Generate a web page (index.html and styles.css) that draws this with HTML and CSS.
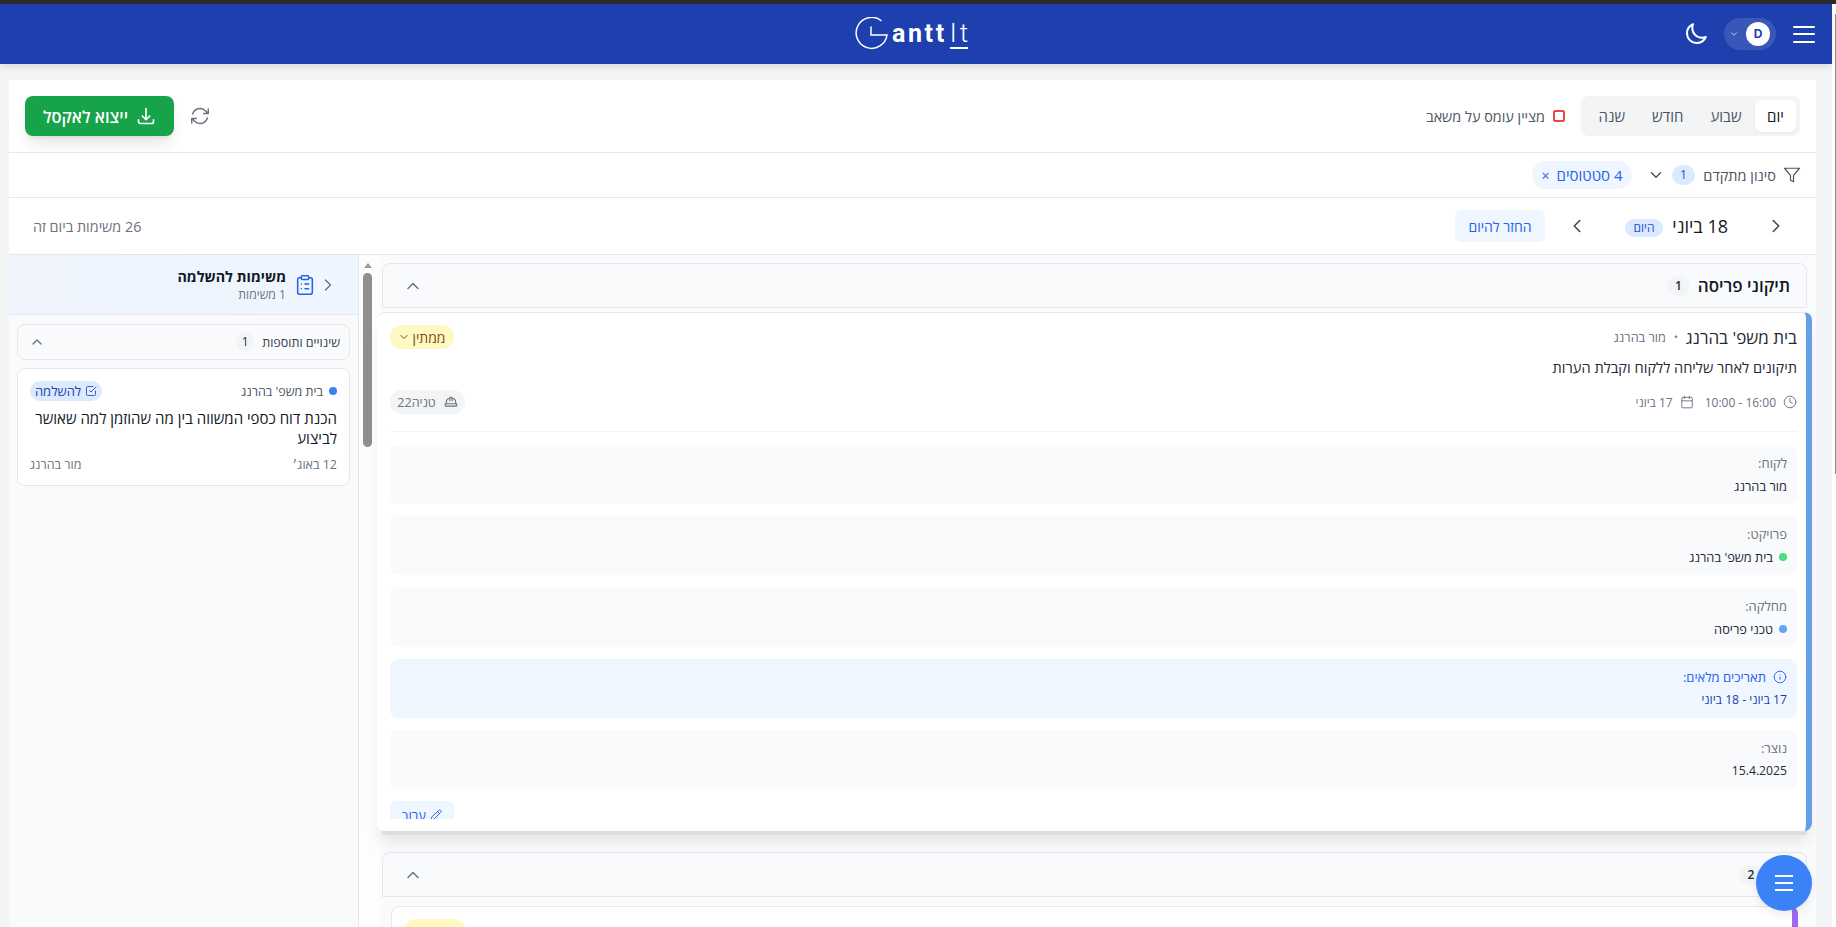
FILE: index.html
```html
<!DOCTYPE html>
<html lang="he" dir="rtl">
<head>
<meta charset="utf-8">
<title>GanttIt</title>
<link rel="stylesheet" href="styles.css">
</head>
<body>
<svg class="defs" aria-hidden="true">
  <symbol id="i-down" viewBox="0 0 24 24"><path d="m6 9 6 6 6-6"/></symbol>
  <symbol id="i-up" viewBox="0 0 24 24"><path d="m18 15-6-6-6 6"/></symbol>
  <symbol id="i-right" viewBox="0 0 24 24"><path d="m9 18 6-6-6-6"/></symbol>
  <symbol id="i-left" viewBox="0 0 24 24"><path d="m15 18-6-6 6-6"/></symbol>
</svg>
<div class="chrome-strip"></div>
<div class="window">
  <div class="page">
    <header class="topbar">
      <div class="topbar-actions">
        <button class="menu-btn" aria-label="menu"><span></span><span></span><span></span></button>
        <div class="user-pill">
          <span class="avatar">D</span>
          <svg class="ic ic-10 user-chev"><use href="#i-down"/></svg>
        </div>
        <svg class="moon" viewBox="0 0 24 24"><path d="M21.752 15.002A9.718 9.718 0 0 1 18 15.75c-5.385 0-9.75-4.365-9.75-9.75 0-1.33.266-2.597.748-3.752A9.753 9.753 0 0 0 3 11.25C3 16.635 7.365 21 12.75 21a9.753 9.753 0 0 0 9.002-5.998z"/></svg>
      </div>
      <div class="logo" dir="ltr">
        <svg class="logo-mark" viewBox="0 0 34 34"><path d="M26 3.5A15.5 15.5 0 1 0 32 18H16V10"/></svg>
        <span class="logo-bold">antt</span><span class="logo-thin">It</span>
      </div>
      <div></div>
    </header>
    <main class="content">
      <section class="panel">
        <div class="toolbar">
          <div class="toolbar-group">
            <div class="segmented">
              <button class="seg seg-active">יום</button>
              <button class="seg">שבוע</button>
              <button class="seg">חודש</button>
              <button class="seg">שנה</button>
            </div>
            <div class="legend"><span class="legend-box"></span><span>מציין עומס על משאב</span></div>
          </div>
          <div class="toolbar-group toolbar-left">
            <svg class="ic refresh" viewBox="0 0 24 24"><path d="M16.023 9.348h4.992v-.001M2.985 19.644v-4.992m0 0h4.992m-4.993 0 3.181 3.183a8.25 8.25 0 0 0 13.803-3.7M4.031 9.865a8.25 8.25 0 0 1 13.803-3.7l3.181 3.182m0-4.991v4.99"/></svg>
            <button class="export-btn">
              <svg class="ic ic-20" viewBox="0 0 24 24"><path d="M3 16.5v2.25A2.25 2.25 0 0 0 5.25 21h13.5A2.25 2.25 0 0 0 21 18.75V16.5M16.5 12 12 16.5m0 0L7.5 12m4.5 4.5V3"/></svg>
              <span>ייצוא לאקסל</span>
            </button>
          </div>
        </div>
        <div class="filters">
          <svg class="ic funnel" viewBox="0 0 24 24"><polygon points="22 3 2 3 10 12.46 10 19 14 21 14 12.46 22 3"/></svg>
          <span class="filter-label">סינון מתקדם</span>
          <span class="filter-count">1</span>
          <svg class="ic filter-chev"><use href="#i-down"/></svg>
          <span class="chip"><span>4 סטטוסים</span><span class="chip-x">×</span></span>
        </div>
        <div class="datebar">
          <div class="datebar-nav">
            <svg class="ic date-chev"><use href="#i-right"/></svg>
            <span class="date-title">18 ביוני</span>
            <span class="today-tag">היום</span>
            <svg class="ic date-chev date-chev2"><use href="#i-left"/></svg>
            <button class="back-today">החזר להיום</button>
          </div>
          <span class="task-total">26 משימות ביום זה</span>
        </div>
        <div class="workspace">
          <div class="board">
            <div class="group">
              <div class="group-head">
                <span class="group-title">תיקוני פריסה</span>
                <span class="count">1</span>
                <svg class="ic head-chev"><use href="#i-up"/></svg>
              </div>
              <article class="task-card strip-blue">
                <div class="task-scroll">
                  <div class="row-between">
                    <div class="task-heading">
                      <span class="task-project">בית משפ' בהרנג</span>
                      <span class="task-bullet">•</span>
                      <span class="task-client">מור בהרנג</span>
                    </div>
                    <span class="status-pill">ממתין<svg class="ic ic-12"><use href="#i-down"/></svg></span>
                  </div>
                  <p class="task-desc">תיקונים לאחר שליחה ללקוח וקבלת הערות</p>
                  <div class="row-between task-meta-row">
                    <div class="task-meta">
                      <svg class="ic ic-14" viewBox="0 0 24 24"><circle cx="12" cy="12" r="10"/><path d="M12 6v6l4 2"/></svg>
                      <span class="time-text" dir="ltr">10:00 - 16:00</span>
                      <svg class="ic ic-14 meta-gap" viewBox="0 0 24 24"><path d="M8 2v4M16 2v4M3 10h18"/><rect x="3" y="4" width="18" height="18" rx="2"/></svg>
                      <span>17 ביוני</span>
                    </div>
                    <span class="worker-pill">
                      <svg class="ic ic-14" viewBox="0 0 24 24"><path d="M2 18a1 1 0 0 0 1 1h18a1 1 0 0 0 1-1v-2a1 1 0 0 0-1-1H3a1 1 0 0 0-1 1v2z"/><path d="M10 10V5a1 1 0 0 1 1-1h2a1 1 0 0 1 1 1v5"/><path d="M4 15v-3a6 6 0 0 1 6-6"/><path d="M14 6a6 6 0 0 1 6 6v3"/></svg>
                      <span>טניה22</span>
                    </span>
                  </div>
                  <div class="divider"></div>
                  <div class="info-list">
                    <div class="info-box"><div class="info-label">לקוח:</div><div class="info-value">מור בהרנג</div></div>
                    <div class="info-box"><div class="info-label">פרויקט:</div><div class="info-value"><span class="dot dot-green"></span>בית משפ' בהרנג</div></div>
                    <div class="info-box"><div class="info-label">מחלקה:</div><div class="info-value"><span class="dot dot-blue"></span>טכני פריסה</div></div>
                    <div class="info-box info-box-blue">
                      <div class="info-label"><svg class="ic ic-14" viewBox="0 0 24 24"><circle cx="12" cy="12" r="10"/><path d="M12 16v-4M12 8h.01"/></svg>תאריכים מלאים:</div>
                      <div class="info-value info-value-num">17 ביוני - 18 ביוני</div>
                    </div>
                    <div class="info-box"><div class="info-label">נוצר:</div><div class="info-value info-value-num">15.4.2025</div></div>
                  </div>
                  <div class="edit-wrap">
                    <button class="edit-btn">
                      <svg class="ic ic-12" viewBox="0 0 24 24"><path d="M17 3a2.85 2.83 0 1 1 4 4L7.5 20.5 2 22l1.5-5.5Z"/><path d="m15 5 4 4"/></svg>
                      <span>ערוך</span>
                    </button>
                  </div>
                </div>
              </article>
            </div>
            <div class="group group-second">
              <div class="group-head">
                <span class="group-title">דף</span>
                <span class="count">2</span>
                <svg class="ic head-chev"><use href="#i-up"/></svg>
              </div>
              <article class="task-card-plain">
                <div class="row-between row-top">
                  <span class="task-project task-project-low">עימוד לדפוס</span>
                  <span class="status-pill status-blank"></span>
                </div>
              </article>
            </div>
          </div>
          <div class="fake-scroll"><span class="fake-arrow"></span><span class="fake-thumb"></span></div>
          <aside class="sidebar">
            <div class="side-head">
              <svg class="ic side-chev-svg"><use href="#i-right"/></svg>
              <svg class="side-clip" viewBox="0 0 24 24"><rect x="8" y="2" width="8" height="4" rx="1"/><path d="M16 4h2a2 2 0 0 1 2 2v14a2 2 0 0 1-2 2H6a2 2 0 0 1-2-2V6a2 2 0 0 1 2-2h2"/><path d="M12 11h4M12 16h4M8 11h.01M8 16h.01"/></svg>
              <div class="side-title-wrap">
                <div class="side-title">משימות להשלמה</div>
                <div class="side-sub">1 משימות</div>
              </div>
            </div>
            <div class="side-body">
              <div class="side-group">
                <span class="side-group-title">שינויים ותוספות</span>
                <span class="count count-small">1</span>
                <svg class="ic ic-16 side-group-chev"><use href="#i-up"/></svg>
              </div>
              <div class="side-card">
                <div class="row-between">
                  <span class="side-project"><span class="dot dot-primary"></span>בית משפ' בהרנג</span>
                  <span class="complete-pill">
                    <svg class="ic ic-12" viewBox="0 0 24 24"><path d="M9 11l3 3L22 4"/><path d="M21 12v7a2 2 0 0 1-2 2H5a2 2 0 0 1-2-2V5a2 2 0 0 1 2-2h11"/></svg>
                    <span>להשלמה</span>
                  </span>
                </div>
                <p class="side-task">הכנת דוח כספי המשווה בין מה שהוזמן למה שאושר לביצוע</p>
                <div class="row-between side-foot"><span>12 באוג׳</span><span>מור בהרנג</span></div>
              </div>
            </div>
          </aside>
        </div>
      </section>
    </main>
  </div>
  <div class="edge"><span class="edge-thumb"></span></div>
</div>
<button class="fab" aria-label="menu"><span></span><span></span><span></span></button>
</body>
</html>
```

FILE: styles.css
```css
* { box-sizing: border-box; }
html, body { margin: 0; height: 100%; overflow: hidden; }
body {
  font-family: "Open Sans", "Liberation Sans", sans-serif;
  color: #1f2937;
  background: #fff;
  font-size: 12px;
}
button { font: inherit; border: 0; background: none; padding: 0; color: inherit; }
p { margin: 0; }
.defs { width: 0; height: 0; position: absolute; }

.ic { fill: none; stroke: currentColor; stroke-width: 2; stroke-linecap: round; stroke-linejoin: round; flex: none; display: block; }
.ic-10 { width: 10px; height: 10px; }
.ic-12 { width: 12px; height: 12px; }
.ic-14 { width: 14px; height: 14px; }
.ic-16 { width: 16px; height: 16px; }
.ic-20 { width: 20px; height: 20px; }

.chrome-strip { height: 4px; background: #2c2c2e; }
.window { display: flex; flex-direction: row-reverse; height: 923px; }
.page { width: 1832px; flex: none; background: #f3f4f6; display: flex; flex-direction: column; }
.edge { flex: 1; background: #fff; display: flex; justify-content: flex-start; }
.edge-thumb { width: 1px; height: 460px; margin-top: 10px; background: #8a8a8a; }

.topbar {
  height: 60px; flex: none; background: #1e40af;
  display: grid; grid-template-columns: 1fr auto 1fr; align-items: center;
  box-shadow: 0 4px 6px -1px rgba(0,0,0,.1);
  position: relative; z-index: 2; padding: 0 17px;
}
.topbar-actions { display: flex; align-items: center; }
.menu-btn { width: 22px; height: 17px; display: flex; flex-direction: column; justify-content: space-between; }
.menu-btn span { height: 2px; background: #fff; border-radius: 1px; }
.user-pill {
  margin-right: 17px; width: 52px; height: 32px; border-radius: 16px;
  background: rgba(255,255,255,.12);
  display: flex; align-items: center; padding-right: 6px; color: #d5ddf5; gap: 7px;
}
.avatar {
  width: 24px; height: 24px; border-radius: 50%; background: #fff; color: #1e40af;
  font: 700 12px/24px Inter, sans-serif; text-align: center;
}
.moon { width: 24px; height: 24px; margin-right: 16px; fill: none; stroke: #fff; stroke-width: 2; stroke-linejoin: round; }

.logo { display: flex; align-items: baseline; color: #fff; height: 34px; width: 118px; }
.logo-mark { width: 34px; height: 34px; fill: none; stroke: #fff; stroke-width: 1.5; stroke-linecap: round; align-self: center; margin-left: -2px; margin-right: 3px; }
.logo-bold { font: 700 25px/34px Roboto, sans-serif; letter-spacing: 2.6px; }
.logo-thin { font: 300 26px/24px Roboto, sans-serif; letter-spacing: 3px; border-bottom: 2px solid #fff; margin-left: 3px; width: 18px; height: 28px; flex: none; }

.content { padding: 16px 16px 0 0; margin-left: 9px; flex: 1; min-height: 0; }
.panel { background: #fff; height: 100%; display: flex; flex-direction: column; }

.toolbar { height: 72px; flex: none; display: flex; align-items: center; justify-content: space-between; padding: 0 16px; }
.toolbar-group { display: flex; align-items: center; }
.segmented { background: #f3f4f6; border-radius: 8px; height: 40px; padding: 4px; display: flex; width: 219px; }
.seg { height: 32px; padding: 0 10px; color: #4b5563; font-size: 15px; flex: 1 1 auto; }
.seg-active { background: #fff; color: #111827; border-radius: 6px; box-shadow: 0 1px 2px rgba(0,0,0,.06); font-weight: 500; flex: none; width: 41px; padding: 0; }
.legend { display: flex; align-items: center; gap: 8px; margin-right: 16px; color: #4b5563; font-size: 14.4px; }
.legend-box { width: 12px; height: 12px; border: 2px solid #ef4444; border-radius: 2px; }
.toolbar-left { gap: 15px; }
.refresh { width: 22px; height: 22px; color: #6b7280; stroke-width: 1.6; }
.export-btn {
  width: 149px; height: 40px; border-radius: 8px; background: #16a34a; color: #fff;
  font-size: 16.5px; font-weight: 600; display: flex; align-items: center; justify-content: center; gap: 8px;
  box-shadow: 0 10px 15px -3px rgba(0,0,0,.1), 0 4px 6px -4px rgba(0,0,0,.1);
}

.filters {
  height: 46px; flex: none; border-top: 1px solid #e5e7eb; border-bottom: 1px solid #e5e7eb;
  display: flex; align-items: center; padding: 0 15px; color: #4b5563; font-size: 14.5px;
}
.funnel { width: 18px; height: 18px; color: #4b5563; stroke-width: 1.6; }
.filter-label { margin-right: 7px; width: 73px; white-space: nowrap; }
.filter-count { width: 23px; height: 20px; border-radius: 10px; background: #dbeafe; color: #1d4ed8; text-align: center; line-height: 20px; margin-right: 8px; font-size: 12px; }
.filter-chev { width: 18px; height: 18px; margin-right: 7px; color: #4b5563; }
.chip {
  margin-right: 15px; height: 28px; width: 100px; border-radius: 14px; background: #eff6ff; color: #2563eb;
  display: flex; align-items: center; justify-content: center; gap: 7px; font-size: 15px; white-space: nowrap;
}
.chip-x { font-size: 14px; }

.datebar { height: 57px; flex: none; display: flex; align-items: center; justify-content: space-between; padding: 0 29px 0 24px; border-bottom: 1px solid #e5e7eb; border-radius: 8px 8px 0 0; }
.datebar-nav { display: flex; align-items: center; }
.date-chev { width: 22px; height: 22px; color: #374151; stroke-width: 1.6; }
.date-title { font-size: 18px; font-weight: 500; color: #111827; margin-right: 37px; white-space: nowrap; width: 56px; }
.today-tag { margin-right: 9px; width: 38px; height: 18px; border-radius: 9px; background: #dbeafe; color: #1d4ed8; font-size: 12px; text-align: center; line-height: 18px; position: relative; top: 2px; }
.date-chev2 { margin-right: 37px; }
.back-today { margin-right: 21px; width: 90px; height: 32px; border-radius: 6px; background: #eff6ff; color: #2563eb; font-size: 14px; }
.task-total { font-size: 14.4px; color: #6b7280; }

.workspace { flex: 1; min-height: 0; display: flex; overflow: hidden; }
.board { flex: 1; min-width: 0; background: #fafbfc; padding: 8px 9px 0 3px; }
.group-head {
  height: 45px; background: #f9fafb; border: 1px solid #e5e7eb; border-radius: 8px 8px 0 0;
  display: flex; align-items: center; padding: 0 16px;
}
.group-title { font-size: 17px; font-weight: 600; color: #111827; }
.count { margin-right: 8px; width: 23px; height: 20px; border-radius: 10px; background: #f3f4f6; color: #1f2937; font-size: 12px; font-weight: 600; text-align: center; line-height: 20px; }
.head-chev { width: 20px; height: 20px; margin-right: auto; margin-left: 4px; color: #6b7280; stroke-width: 1.8; }
.group-second { margin-top: 21px; }

.task-card {
  margin: 4px -5px 0 -5px; height: 519px; background: #fff; border-top: 1px solid #e5e7eb;
  border-right: 6px solid #649fe8; border-radius: 8px; overflow: hidden;
  box-shadow: 0 9px 0 -5px #dcdddf, 0 14px 16px -4px rgba(0,0,0,.1);
  position: relative; z-index: 1;
}
.task-scroll { padding: 12px 9px 0 13px; }
.row-between { display: flex; align-items: center; justify-content: space-between; }
.row-top { align-items: flex-start; }
.task-heading { display: flex; align-items: center; gap: 8px; white-space: nowrap; }
.task-project { font-size: 17px; color: #1f2937; }
.task-project-low { margin-top: 3px; }
.task-bullet { font-size: 10px; color: #6b7280; }
.task-client { font-size: 12.7px; color: #6b7280; }
.status-pill {
  height: 24px; width: 64px; border-radius: 12px; background: #fef9c3; color: #854d0e;
  display: flex; align-items: center; justify-content: center; gap: 2px; font-size: 14px;
}
.task-desc { margin-top: 5px; font-size: 14.6px; line-height: 26px; color: #1f2937; }
.task-meta-row { margin-top: 10px; }
.task-meta { display: flex; align-items: center; color: #6b7280; font-size: 12px; gap: 7px; }
.task-meta .ic { stroke-width: 1.6; }
.meta-gap { margin-right: 4px; }
.time-text { white-space: nowrap; }
.worker-pill { height: 24px; width: 75px; border-radius: 12px; background: #f3f4f6; color: #6b7280; display: flex; align-items: center; justify-content: center; gap: 8px; font-size: 12.5px; }
.divider { margin-top: 17px; height: 1px; background: #f3f4f6; }
.info-list { margin-top: 13px; display: flex; flex-direction: column; gap: 12.25px; }
.info-box { height: 59px; border-radius: 8px; background: #f9fafb; padding: 9px 10px; }
.info-label { font-size: 13px; line-height: 18px; color: #6b7280; display: flex; align-items: center; gap: 7px; }
.info-value { margin-top: 5px; font-size: 12.8px; line-height: 18px; color: #1f2937; display: flex; align-items: center; gap: 6px; }
.info-value-num { font-size: 12.2px; }
.info-box-blue { background: #eff6ff; }
.info-box-blue .info-label { color: #2563eb; }
.info-box-blue .info-value { color: #1e40af; }
.info-box-blue .ic { stroke-width: 1.6; }
.dot { width: 8px; height: 8px; border-radius: 50%; flex: none; }
.dot-green { background: #4ade80; }
.dot-blue { background: #60a5fa; }
.dot-primary { background: #3b82f6; }
.edit-wrap { margin-top: 12px; height: 18px; overflow: hidden; display: flex; justify-content: flex-end; }
.edit-btn { width: 64px; height: 28px; border-radius: 6px; background: #eff6ff; color: #2563eb; display: flex; align-items: center; justify-content: center; gap: 4px; font-size: 13px; }

.task-card-plain {
  margin: 9px 9px 0 9px; height: 60px; background: #fff; border: 1px solid #e5e7eb; border-right: 6px solid #a068f0;
  border-radius: 8px; padding: 12px 8px 0 12px;
}
.status-blank { width: 62px; }

.fake-scroll { width: 20px; flex: none; background: #fdfdfe; display: flex; flex-direction: column; align-items: center; padding: 8px 7px 0 4px; }
.fake-arrow { width: 0; height: 0; border: 4px solid transparent; border-top: 0; border-bottom: 5px solid #9a9a9a; }
.fake-thumb { margin-top: 5px; width: 9px; height: 174px; border-radius: 5px; background: #8f8f8f; }

.sidebar { width: 350px; flex: none; background: #f9fafb; border-right: 1px solid #e5e7eb; display: flex; flex-direction: column; }
.side-head {
  height: 60px; flex: none; background: linear-gradient(to left, #eff6ff, #eef3fc);
  border-bottom: 1px solid #e5e7eb; display: flex; align-items: center; padding: 0 20px 0 0;
}
.side-chev-svg { width: 20px; height: 20px; color: #6b7280; stroke-width: 1.6; }
.side-clip { width: 22px; height: 22px; margin-right: 2px; fill: none; stroke: #2563eb; stroke-width: 1.7; stroke-linecap: round; stroke-linejoin: round; flex: none; }
.side-title-wrap { margin-right: 8px; }
.side-title { font-size: 14.3px; font-weight: 700; color: #111827; line-height: 19px; }
.side-sub { font-size: 12.2px; color: #6b7280; line-height: 17px; }
.side-body { padding: 9px 8px 0 8px; display: flex; flex-direction: column; gap: 8px; }
.side-group { height: 36px; border: 1px solid #e5e7eb; border-radius: 8px; background: #f9fafb; display: flex; align-items: center; padding: 0 9px 0 11px; }
.side-group-title { font-size: 12.5px; font-weight: 500; color: #374151; white-space: nowrap; }
.count-small { width: 18px; height: 20px; font-weight: 400; margin-right: 8px; }
.side-group-chev { margin-right: auto; color: #6b7280; }
.side-card { height: 118px; background: #fff; border: 1px solid #e5e7eb; border-radius: 8px; padding: 12px 12px; }
.side-project { display: flex; align-items: center; gap: 6px; font-size: 12.5px; color: #4b5563; }
.complete-pill { height: 20px; width: 72px; border-radius: 10px; background: #dbeafe; color: #1e40af; display: flex; align-items: center; justify-content: center; gap: 4px; font-size: 13px; }
.complete-pill .ic { stroke-width: 1.6; }
.side-task { margin-top: 7px; font-size: 15px; line-height: 20px; font-weight: 500; color: #111827; }
.side-foot { margin-top: 8px; font-size: 12.5px; color: #6b7280; }

.fab {
  position: fixed; left: 1756px; top: 855px; width: 56px; height: 56px; border-radius: 50%; background: #3b82f6;
  display: flex; flex-direction: column; align-items: center; justify-content: center; gap: 5px;
  z-index: 5; box-shadow: 0 4px 10px rgba(0,0,0,.08);
}
.fab span { width: 18px; height: 2px; background: #fff; }
```
